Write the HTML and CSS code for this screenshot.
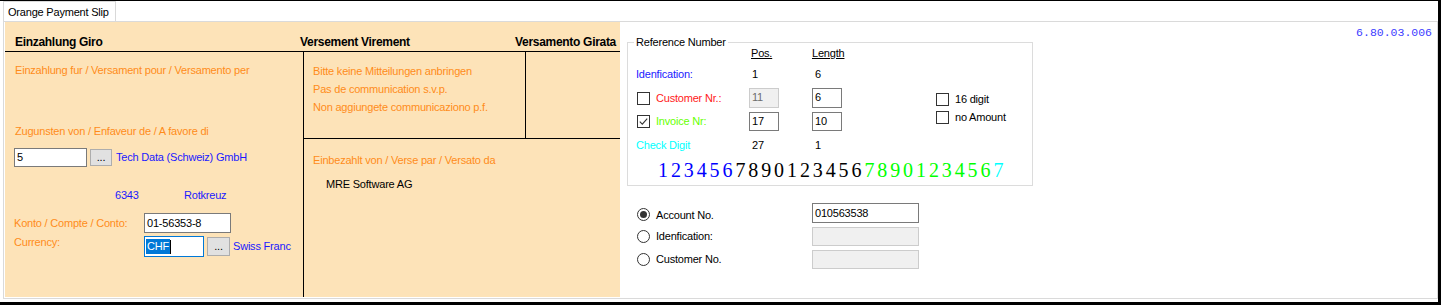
FILE: index.html
```html
<!DOCTYPE html>
<html lang="en">
<head>
  <meta charset="UTF-8" />
  <title>Orange Payment Slip</title>
  <link rel="stylesheet" href="styles.css">
</head>
<body>
  <div class="window">
    <div class="tabs">
      <div class="tab">Orange Payment Slip</div>
    </div>

    <div class="page">
      <!-- the orange slip itself -->
      <div class="slip">
        <div class="slip-head">
          <div class="h-left">Einzahlung Giro</div>
          <div class="h-right">
            <span>Versement Virement</span>
            <span>Versamento Girata</span>
          </div>
        </div>

        <div class="slip-body">
          <div class="col-left">
            <div class="lbl l1">Einzahlung fur / Versament pour / Versamento per</div>
            <div class="lbl l2">Zugunsten von / Enfaveur de / A favore di</div>

            <div class="row-creditor">
              <div class="tb tb-nr">5</div>
              <div class="dots">...</div>
              <span class="blue gap">Tech Data (Schweiz) GmbH</span>
            </div>

            <div class="row-city blue">
              <span class="zip">6343</span>
              <span>Rotkreuz</span>
            </div>

            <div class="row-konto">
              <span class="lbl konto-lbl">Konto / Compte / Conto:</span>
              <div class="tb tb-konto">01-56353-8</div>
            </div>

            <div class="row-currency">
              <span class="lbl konto-lbl cur-lbl">Currency:</span>
              <div class="tb tb-cur"><span class="sel">CHF</span><span class="caret"></span></div>
              <div class="dots dots-cur">...</div>
              <span class="blue gap-cur">Swiss Franc</span>
            </div>
          </div>

          <div class="col-right">
            <div class="notice-row">
              <div class="notice lbl">
                <div>Bitte keine Mitteilungen anbringen</div>
                <div>Pas de communication s.v.p.</div>
                <div>Non aggiungete communicaziono p.f.</div>
              </div>
              <div class="notice-blank"></div>
            </div>
            <div class="payer">
              <div class="lbl">Einbezahlt von / Verse par / Versato da</div>
              <div class="payer-name">MRE Software AG</div>
            </div>
          </div>
        </div>
      </div>

      <!-- settings on the right -->
      <div class="side">
        <div class="side-top">
          <fieldset class="refbox">
            <legend>Reference Number</legend>

            <div class="rr rr-head">
              <div class="c1"></div>
              <div class="c2"><u>Pos.</u></div>
              <div class="c3 head-len"><u>Length</u></div>
            </div>

            <div class="rr rr-ident">
              <div class="c1 c-blue">Idenfication:</div>
              <div class="c2 num">1</div>
              <div class="c3 num">6</div>
            </div>

            <div class="rr rr-cust">
              <div class="c1"><span class="cb"></span><span class="cb-lbl c-red">Customer Nr.:</span></div>
              <div class="c2"><div class="tb tb-small tb-off">11</div></div>
              <div class="c3"><div class="tb tb-small tb-tall">6</div></div>
              <div class="c4 c4-low"><span class="cb"></span><span class="cb-lbl">16 digit</span></div>
            </div>

            <div class="rr rr-inv">
              <div class="c1"><span class="cb"><svg width="11" height="11" viewBox="0 0 11 11"><path d="M1.8 5.6 L4.3 8.1 L9.2 2.6" fill="none" stroke="#333" stroke-width="1.1"/></svg></span><span class="cb-lbl c-lime">Invoice Nr:</span></div>
              <div class="c2"><div class="tb tb-small">17</div></div>
              <div class="c3"><div class="tb tb-small">10</div></div>
              <div class="c4 c4-top"><span class="cb"></span><span class="cb-lbl">no Amount</span></div>
            </div>

            <div class="rr rr-check">
              <div class="c1 c-cyan">Check Digit</div>
              <div class="c2 num">27</div>
              <div class="c3 num">1</div>
            </div>

            <div class="rr rr-digits">
              <span class="d-blue">123456</span><span class="d-black">7890123456</span><span class="d-green">7890123456</span><span class="d-cyan">7</span>
            </div>
          </fieldset>

          <div class="version">6.80.03.006</div>
        </div>

        <div class="radios">
          <div class="radio-row">
            <div class="rc1"><span class="rb on"></span><span class="rb-lbl">Account No.</span></div>
            <div class="tb tb-wide">010563538</div>
          </div>
          <div class="radio-row">
            <div class="rc1"><span class="rb"></span><span class="rb-lbl">Idenfication:</span></div>
            <div class="tb tb-wide tb-off"></div>
          </div>
          <div class="radio-row">
            <div class="rc1"><span class="rb"></span><span class="rb-lbl">Customer No.</span></div>
            <div class="tb tb-wide tb-off"></div>
          </div>
        </div>
      </div>
    </div>
  </div>
</body>
</html>
```

FILE: styles.css
```css
body {
  margin: 0;
  background: #000;
  font-family: 'Liberation Sans', Arial, sans-serif;
  font-size: 11px;
  letter-spacing: -0.2px;
  color: #000;
}
.window {
  margin-top: 1px;
  width: 1438px;
  height: 301px;
  background: #fff;
}
.tabs {
  height: 20px;
  padding-left: 3px;
  display: flex;
  align-items: flex-end;
}
.tab {
  height: 20px;
  box-sizing: border-box;
  border: 1px solid #d9d9d9;
  border-bottom: none;
  padding: 0 6px 0 4px;
  line-height: 20px;
  background: #fff;
}
.page {
  margin-left: 3px;
  width: 1435px;
  height: 278px;
  box-sizing: border-box;
  border: 1px solid #dadada;
  padding-left: 1px;
  display: flex;
}

/* slip */
.slip {
  width: 615px;
  height: 275px;
  flex: none;
  background: #fde3b8;
}
.slip-head {
  height: 27px;
  padding-bottom: 2px;
  border-bottom: 1px solid #000;
  display: flex;
  align-items: flex-end;
  line-height: 14px;
  font-size: 12px;
  font-weight: bold;
  letter-spacing: -0.3px;
}
.h-left {
  width: 295px;
  padding-left: 10px;
  box-sizing: border-box;
}
.h-right {
  flex: 1;
  display: flex;
  justify-content: space-between;
  padding-right: 4px;
}
.slip-body {
  display: flex;
  height: 245px;
  line-height: 13px;
}
.col-left {
  width: 298px;
  border-right: 1px solid #000;
}
.col-right {
  flex: 1;
  display: flex;
  flex-direction: column;
}
.lbl {
  color: #ff8c1a;
}
.blue {
  color: #1a1aff;
}
.l1 {
  margin-top: 12px;
  padding-left: 10px;
}
.l2 {
  margin-top: 48px;
  padding-left: 10px;
}
.row-creditor {
  margin-top: 10px;
  padding-left: 9px;
  display: flex;
  align-items: center;
  height: 19px;
}
.tb {
  box-sizing: border-box;
  height: 19px;
  border: 1px solid #7a7a7a;
  background: #fff;
  padding: 0 2px;
  line-height: 17px;
  white-space: nowrap;
}
.tb-nr {
  width: 73px;
}
.dots {
  width: 22px;
  height: 17px;
  box-sizing: border-box;
  margin-left: 3px;
  border: 1px solid #adadad;
  background: #e1e1e1;
  text-align: center;
  line-height: 15px;
}
.gap {
  margin-left: 4px;
}
.row-city {
  margin-top: 22px;
  padding-left: 110px;
  display: flex;
}
.zip {
  width: 69px;
}
.row-konto {
  margin-top: 11px;
  padding-left: 9px;
  display: flex;
  align-items: center;
  height: 20px;
}
.konto-lbl {
  width: 130px;
}
.tb-konto {
  width: 87px;
  height: 20px;
  line-height: 18px;
}
.row-currency {
  margin-top: 3px;
  padding-left: 9px;
  display: flex;
  align-items: center;
  height: 21px;
}
.cur-lbl {
  align-self: flex-start;
}
.tb-cur {
  width: 60px;
  height: 21px;
  line-height: 19px;
  border-color: #0078d7;
  padding-left: 1px;
  display: flex;
  align-items: center;
}
.sel {
  background: #0078d7;
  color: #fff;
  line-height: 15px;
  padding: 0 1px;
}
.caret {
  width: 1px;
  height: 14px;
  background: #000;
}
.dots-cur {
  width: 23px;
  height: 19px;
  line-height: 17px;
}
.gap-cur {
  margin-left: 3px;
}
.notice-row {
  display: flex;
  height: 86px;
  border-bottom: 1px solid #000;
}
.notice {
  width: 222px;
  border-right: 1px solid #000;
  padding: 10px 0 0 9px;
  box-sizing: border-box;
  line-height: 18px;
}
.notice-blank {
  flex: 1;
}
.payer {
  padding: 15px 0 0 9px;
}
.payer-name {
  margin-top: 11px;
  padding-left: 13px;
}

/* right side */
.side {
  flex: 1;
  padding-left: 7px;
  display: flex;
  flex-direction: column;
}
.side-top {
  display: flex;
  justify-content: space-between;
  align-items: flex-start;
}
.version {
  padding-top: 4px;
  margin-right: 5px;
  font-family: 'Liberation Mono', 'Courier New', monospace;
  font-size: 11.5px;
  letter-spacing: 0;
  line-height: 13px;
  color: #3c3cff;
}
.refbox {
  width: 406px;
  box-sizing: border-box;
  margin: 15px 0 0 0;
  padding: 0 0 2px 8px;
  border: 1px solid #dcdcdc;
  line-height: 13px;
}
.refbox legend {
  padding: 0 2px;
  margin-left: -2px;
  line-height: 11px;
}
.rr {
  display: flex;
  align-items: center;
}
.rr-head {
  height: 16px;
  margin-top: -1px;
  align-items: flex-start;
}
.rr-ident {
  height: 23px;
}
.rr-cust {
  height: 24px;
}
.rr-inv {
  height: 23px;
}
.rr-check {
  height: 24px;
}
.rr-digits {
  height: 26px;
  padding-left: 22px;
  font-family: 'Liberation Serif', 'Times New Roman', serif;
  font-size: 20px;
  letter-spacing: 2.9px;
}
.c1 {
  width: 113px;
  display: flex;
  align-items: center;
}
.c2 {
  width: 63px;
  padding-left: 2px;
  box-sizing: border-box;
}
.c3 {
  width: 123px;
}
.head-len {
  padding-left: 0;
}
.num {
  padding-left: 3px;
  box-sizing: border-box;
}
.rr-cust .c2, .rr-inv .c2 {
  padding-left: 0;
}
.c4 {
  display: flex;
  align-items: center;
}
.c4-low {
  margin-top: 3px;
}
.c4-top {
  align-self: flex-start;
  margin-top: 1px;
}
.cb {
  width: 13px;
  height: 13px;
  box-sizing: border-box;
  border: 1px solid #333;
  background: #fff;
  margin-left: 1px;
  display: flex;
}
.cb-lbl {
  margin-left: 6px;
}
.tb-small {
  width: 30px;
}
.tb-tall {
  height: 20px;
}
.rr-cust .tb-off {
  height: 20px;
}
.tb-off {
  border-color: #cccccc;
  background: #f0f0f0;
  color: #6d6d6d;
}
.c-blue {
  color: #1a1aff;
}
.c-red {
  color: #ff1a1a;
}
.c-lime {
  color: #66ff00;
}
.c-cyan {
  color: #00ffff;
}
.d-blue {
  color: #0000ff;
}
.d-black {
  color: #000;
}
.d-green {
  color: #00ff00;
}
.d-cyan {
  color: #00ffff;
}

.radios {
  margin-top: 17px;
  padding-left: 10px;
  display: flex;
  flex-direction: column;
  gap: 3px;
}
.radio-row {
  display: flex;
  align-items: center;
  height: 20px;
}
.rc1 {
  width: 175px;
  display: flex;
  align-items: center;
}
.radio-row:first-child .rc1 {
  margin-top: 3px;
}
.rb {
  width: 13px;
  height: 13px;
  box-sizing: border-box;
  border: 1px solid #333;
  border-radius: 50%;
  background: #fff;
  display: flex;
  align-items: center;
  justify-content: center;
}
.rb.on::after {
  content: '';
  width: 7px;
  height: 7px;
  border-radius: 50%;
  background: #333;
}
.rb-lbl {
  margin-left: 6px;
}
.tb-wide {
  width: 107px;
  height: 20px;
  line-height: 18px;
}
.tb-wide.tb-off {
  height: 19px;
}
```
